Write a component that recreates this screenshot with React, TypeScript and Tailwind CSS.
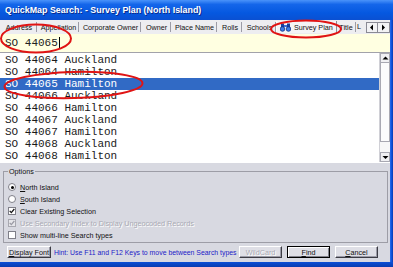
const rows = [
  'SO 44064 Auckland',
  'SO 44064 Hamilton',
  'SO 44065 Hamilton',
  'SO 44066 Auckland',
  'SO 44066 Hamilton',
  'SO 44067 Auckland',
  'SO 44067 Hamilton',
  'SO 44068 Auckland',
  'SO 44068 Hamilton',
];
const selectedRow = 2;

const tabs = [
  { label: 'Address', w: 'w-[37px]' },
  { label: 'Appellation', w: 'w-[42px]' },
  { label: 'Corporate Owner', w: 'w-[62px]' },
  { label: 'Owner', w: 'w-[30px]' },
  { label: 'Place Name', w: 'w-[46px]' },
  { label: 'Rolls', w: 'w-[25px]' },
  { label: 'Schools', w: 'w-[34px]' },
];

function Binoculars() {
  return (
    <svg width="11" height="9" viewBox="0 0 11 9">
      <rect x="1" y="0.5" width="3" height="4" fill="#1a3f9c" />
      <rect x="7" y="0.5" width="3" height="4" fill="#1a3f9c" />
      <rect x="4" y="2" width="3" height="2" fill="#3a6fd8" />
      <circle cx="2.5" cy="6" r="2.3" fill="#3b7be8" stroke="#102e80" strokeWidth="0.8" />
      <circle cx="8.5" cy="6" r="2.3" fill="#3b7be8" stroke="#102e80" strokeWidth="0.8" />
    </svg>
  );
}

function Tri({ dir }: { dir: 'l' | 'r' | 'u' | 'd' }) {
  const pts = { l: '4,0.5 4,6.5 1,3.5', r: '2,0.5 2,6.5 5,3.5', u: '0.5,4.5 6.5,4.5 3.5,1.5', d: '0.5,2 6.5,2 3.5,5' }[dir];
  return (
    <svg width="7" height="7" viewBox="0 0 7 7">
      <polygon points={pts} fill="#000" />
    </svg>
  );
}

function Check({ disabled }: { disabled?: boolean }) {
  return (
    <svg width="6" height="6" viewBox="0 0 7 7">
      <path d="M0.8 3.4 L2.7 5.4 L6.2 1.2" fill="none" stroke={disabled ? '#9a9aa4' : '#111'} strokeWidth="1.5" />
    </svg>
  );
}

function Radio({ checked, label }: { checked?: boolean; label: string }) {
  return (
    <div className="h-[12px] flex items-center pl-[4px]">
      <span className="w-[8px] h-[8px] rounded-full bg-white border border-[#7f7f88] flex items-center justify-center">
        {checked && <span className="w-[3px] h-[3px] rounded-full bg-black" />}
      </span>
      <span className="ml-[4px]">
        <span className="underline">{label[0]}</span>
        {label.slice(1)}
      </span>
    </div>
  );
}

function CheckRow({ checked, disabled, label }: { checked?: boolean; disabled?: boolean; label: string }) {
  return (
    <div className="h-[12px] flex items-center pl-[4px]">
      <span
        className={`w-[8px] h-[8px] border flex items-center justify-center ${
          disabled ? 'bg-[#e6e6ea] border-[#a8a8b0]' : 'bg-white border-[#7f7f88]'
        }`}
      >
        {checked && <Check disabled={disabled} />}
      </span>
      <span className={`ml-[4px] ${disabled ? 'text-[#a9a9b3] [text-shadow:1px_1px_0_#ffffff]' : ''}`}>{label}</span>
    </div>
  );
}

function Btn({ children, w, def, disabled }: { children: React.ReactNode; w: string; def?: boolean; disabled?: boolean }) {
  const frame = def
    ? 'border border-black shadow-[inset_1px_1px_0_#ffffff,inset_-1px_-1px_0_#80808a]'
    : 'border border-t-white border-l-white border-r-[#3c3c44] border-b-[#3c3c44] shadow-[inset_-1px_-1px_0_#9a9aa6]';
  return (
    <div
      className={`${w} h-[12px] shrink-0 flex items-center justify-center whitespace-nowrap bg-[#dfdfe6] ${frame} ${
        disabled ? 'text-[#a9a9b3] [text-shadow:1px_1px_0_#ffffff]' : 'text-[#111]'
      }`}
    >
      {children}
    </div>
  );
}

export default function App() {
  return (
    <div className="relative w-[393px] h-[267px] overflow-hidden flex flex-col bg-[#0b4fd6] font-['Liberation_Sans',Arial,sans-serif] text-[7.2px] leading-[9px] text-[#111]">
      {/* title bar */}
      <div className="h-[20px] shrink-0 flex items-center pl-[5px] bg-[linear-gradient(180deg,#4a93fa_0%,#1466ea_22%,#0558e0_65%,#0a50d2_100%)]">
        <span className="text-white font-bold text-[8.9px] [text-shadow:1px_1px_0_#0a2a8c]">
          QuickMap Search: - Survey Plan (North Island)
        </span>
      </div>

      <div className="flex flex-1 min-h-0">
        <div className="w-[390px] shrink-0 flex flex-col bg-[#d8d9e1]">
          {/* tab strip */}
          <div className="h-[14px] shrink-0 flex items-center bg-[#ededf0]">
            <div className="w-[366px] shrink-0 flex items-center overflow-hidden">
              {tabs.map((t) => (
                <div
                  key={t.label}
                  className={`${t.w} h-[10px] shrink-0 border-r border-[#9c9ca6] flex items-center justify-center pl-[2px] whitespace-nowrap`}
                >
                  {t.label}
                </div>
              ))}
              <div className="w-[61px] h-[12px] shrink-0 flex items-center pl-[3px] bg-[#f4f4f6] border-l border-white border-r border-r-[#8c8c96] whitespace-nowrap">
                <Binoculars />
                <span className="ml-[3px]">Survey Plan</span>
              </div>
              <div className="w-[19px] h-[10px] shrink-0 border-r border-[#9c9ca6] flex items-center justify-center whitespace-nowrap">
                Title
              </div>
              <div className="w-[10px] h-[10px] shrink-0 overflow-hidden pl-[1px] whitespace-nowrap">L</div>
            </div>
            <div className="w-[12px] h-[11px] shrink-0 border border-[#8a8a94] bg-[#f2f2f4] flex items-center justify-center">
              <Tri dir="l" />
            </div>
            <div className="w-[12px] h-[11px] shrink-0 border border-l-0 border-[#8a8a94] bg-[#f2f2f4] flex items-center justify-center">
              <Tri dir="r" />
            </div>
          </div>

          {/* search input */}
          <div className="h-[18px] shrink-0 bg-[#ffffe1] flex items-center pl-[5px] font-['Liberation_Mono','Courier_New',monospace] text-[11px] leading-[12px] text-[#222]">
            <span>SO 44065</span>
            <span className="w-[1px] h-[12px] bg-black ml-[1px]" />
          </div>

          {/* result list */}
          <div className="h-[111px] shrink-0 flex bg-white border-t border-[#a2a2aa] border-b border-b-white">
            <div className="flex-1 pt-[1px] font-['Liberation_Mono','Courier_New',monospace] text-[11px] leading-[12px]">
              {rows.map((r, i) => (
                <div
                  key={i}
                  className={`h-[12px] pl-[5px] whitespace-pre ${i === selectedRow ? 'bg-[#316ac5] text-white' : 'text-[#1a1a1a]'}`}
                >
                  {r}
                </div>
              ))}
            </div>
            <div className="w-[11px] shrink-0 flex flex-col bg-[#f7f7f8] border-l border-[#d0d0d6]">
              <div className="h-[10px] border border-[#a8a8b2] bg-[#f0f0f3] flex items-center justify-center">
                <Tri dir="u" />
              </div>
              <div className="h-[79px] border border-t-0 border-[#a8a8b2] bg-[#fbfbfc]" />
              <div className="flex-1" />
              <div className="h-[10px] border border-[#a8a8b2] bg-[#f0f0f3] flex items-center justify-center">
                <Tri dir="d" />
              </div>
            </div>
          </div>

          {/* bottom panel */}
          <div className="flex-1 flex flex-col">
            <fieldset className="mt-[4px] ml-[3px] w-[385px] border border-[#9d9da6] pb-[1px]">
              <legend className="ml-[4px] px-[1px] leading-[9px]">Options</legend>
              <div className="pt-[5px]">
                <Radio checked label="North Island" />
                <Radio label="South Island" />
                <CheckRow checked label="Clear Existing Selection" />
                <CheckRow checked disabled label="Use Secondary Index to Display Ungeocoded Records" />
                <CheckRow label="Show multi-line Search types" />
              </div>
            </fieldset>
            <div className="mt-[3px] h-[12px] flex items-center pl-[7px]">
              <Btn w="w-[44px]">
                <span>
                  <span className="underline">D</span>isplay Font
                </span>
              </Btn>
              <div className="w-[188px] shrink-0 pl-[3px] overflow-hidden whitespace-nowrap text-[6.9px] text-[#1c1cc8]">
                Hint: Use F11 and F12 Keys to move between Search types
              </div>
              <Btn w="w-[43px]" disabled>
                WildCard
              </Btn>
              <div className="w-[5px] shrink-0" />
              <Btn w="w-[43px]" def>
                <span>
                  <span className="underline">F</span>ind
                </span>
              </Btn>
              <div className="w-[5px] shrink-0" />
              <Btn w="w-[43px]">
                <span>
                  <span className="underline">C</span>ancel
                </span>
              </Btn>
            </div>
          </div>
        </div>
        <div className="flex-1 bg-[linear-gradient(90deg,#2a6ff0,#0b4fd6_60%,#083cb0)]" />
      </div>
      <div className="h-[5px] shrink-0 bg-[linear-gradient(180deg,#0b4fd6,#083cb0)]" />

      {/* red annotation ellipses */}
      <svg className="absolute inset-0 pointer-events-none" width="393" height="267" viewBox="0 0 393 267">
        <g fill="none" stroke="#e01414" strokeWidth="2">
          <ellipse cx="36" cy="38.5" rx="35" ry="14" />
          <ellipse cx="306" cy="29" rx="35" ry="8.5" />
          <ellipse cx="73.5" cy="85" rx="69" ry="13" transform="rotate(-1.5 73.5 85)" />
        </g>
      </svg>
    </div>
  );
}
